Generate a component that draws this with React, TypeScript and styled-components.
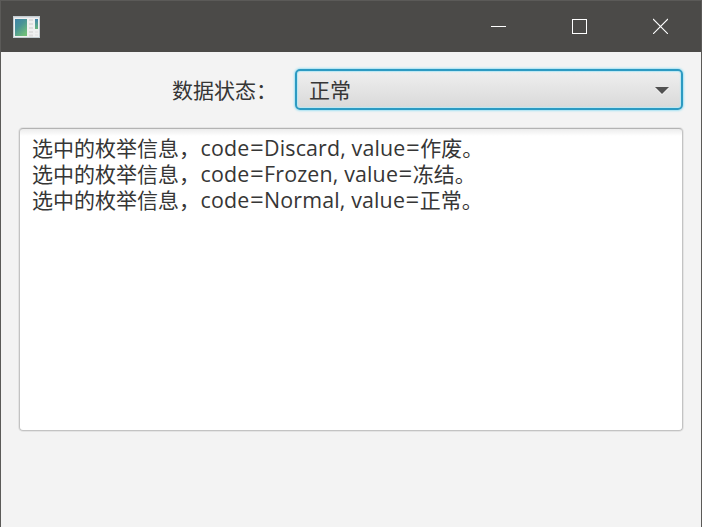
import React from "react";
import styled, { createGlobalStyle } from "styled-components";

const GlobalStyle = createGlobalStyle`
  * { box-sizing: border-box; }
  body { margin: 0; background: #f3f3f3; }
`;

const Window = styled.div`
  display: flex;
  flex-direction: column;
  width: 702px;
  height: 527px;
  overflow: hidden;
  border: 1px solid #5b5a58;
  border-bottom: 0;
  background: #f3f3f3;
  color: #363636;
  font-family: "Noto Sans CJK SC", sans-serif;
  font-size: 21px;
  line-height: 26.4px;
`;

const TitleBar = styled.header`
  display: flex;
  flex: none;
  align-items: center;
  justify-content: space-between;
  height: 51px;
  padding-left: 12px;
  background: #4b4a48;
`;

const Controls = styled.div`
  display: flex;
  height: 100%;
`;

const ControlButton = styled.button`
  display: flex;
  align-items: center;
  justify-content: center;
  width: 81px;
  height: 50px;
  padding: 0;
  border: 0;
  background: transparent;
`;

const Body = styled.main`
  display: flex;
  flex-direction: column;
  padding: 17px 18px 0;
`;

const FormRow = styled.div`
  display: flex;
  align-items: center;
  height: 41px;
`;

const Label = styled.label`
  flex: none;
  width: 276px;
  padding: 0 0 1px 153px;
  white-space: nowrap;
`;

const ComboBox = styled.button`
  display: flex;
  flex: none;
  align-items: center;
  justify-content: space-between;
  width: 388px;
  height: 41px;
  padding: 0 12px 0 12px;
  border: 2px solid #2c9ac2;
  border-radius: 5px;
  background: linear-gradient(#efefef, #d9d9d9);
  box-shadow: 0 0 2px 1px #a5e2f3, inset 0 0 1px 1px #b9e7f3;
  color: inherit;
  font: inherit;
`;

const Selected = styled.span`
  padding-bottom: 1px;
`;

const Arrow = styled.svg`
  display: block;
  margin-top: 2px;
`;

const TextArea = styled.section`
  width: 664px;
  height: 303px;
  margin-top: 18px;
  padding: 5px 12px;
  border: 1px solid #c3c3c3;
  border-top-color: #b3b3b3;
  border-radius: 4px;
  background: linear-gradient(#ececec, #fff 7px);
  box-shadow: 0 0 0 1px #e4e4e4;
`;

const Line = styled.div`
  display: flex;
  align-items: baseline;
  height: 26px;
  line-height: 26px;
  white-space: pre;
`;

const Prefix = styled.span`
  width: 168.6px;
`;

const Latin = styled.span`
  font-family: "Open Sans", sans-serif;
  font-size: 21.4px;
  letter-spacing: 0.15px;
`;

const Equals = styled.span`
  width: 14.7px;
  font-family: "Open Sans", sans-serif;
  font-size: 24px;
  text-align: center;
`;

const entries = [
  { code: "Discard", value: "作废" },
  { code: "Frozen", value: "冻结" },
  { code: "Normal", value: "正常" },
];

const AppIcon = () => (
  <svg width="28" height="24" viewBox="0 0 28 24">
    <defs>
      <linearGradient id="pane" x1="0" y1="0" x2="0.7" y2="1">
        <stop offset="0" stopColor="#3f83a8" />
        <stop offset="0.45" stopColor="#489297" />
        <stop offset="1" stopColor="#70be79" />
      </linearGradient>
      <linearGradient id="bar" x1="0" y1="0" x2="0" y2="1">
        <stop offset="0" stopColor="#4285ad" />
        <stop offset="1" stopColor="#68b67b" />
      </linearGradient>
    </defs>
    <rect x="0.5" y="1.5" width="26" height="21" fill="#f0f1f1" stroke="#c3cdd1" />
    <path d="M1 2.5h25" stroke="#dcdde2" />
    <rect x="2" y="4" width="12" height="17" fill="url(#pane)" />
    <path d="M16 5h4M16 9h4M16 13h4M16 17h4M16 20.5h4" stroke="#dedede" strokeWidth="2" />
    <rect x="22" y="4" width="3" height="10" fill="url(#bar)" />
    <path d="M22 17h3M22 20h3" stroke="#e0e0e0" />
  </svg>
);

export default function App() {
  return (
    <>
      <GlobalStyle />
      <Window>
        <TitleBar>
          <AppIcon />
          <Controls>
            <ControlButton aria-label="Minimize">
              <svg width="15" height="16" viewBox="0 0 15 16" stroke="#fff">
                <path d="M0 8.5h15" />
              </svg>
            </ControlButton>
            <ControlButton aria-label="Maximize">
              <svg width="15" height="16" viewBox="0 0 15 16" stroke="#fff" fill="none">
                <rect x="0.5" y="1.5" width="14" height="14" />
              </svg>
            </ControlButton>
            <ControlButton aria-label="Close">
              <svg width="15" height="16" viewBox="0 0 15 16" stroke="#fff" strokeWidth="1.1">
                <path d="M0 1l15 15M15 1L0 16" />
              </svg>
            </ControlButton>
          </Controls>
        </TitleBar>
        <Body>
          <FormRow>
            <Label>数据状态：</Label>
            <ComboBox>
              <Selected>正常</Selected>
              <Arrow width="14" height="8" viewBox="0 0 14 8">
                <path d="M0 1h14L7 8z" fill="#f5f5f5" />
                <path d="M0 0h14L7 7z" fill="#515151" />
              </Arrow>
            </ComboBox>
          </FormRow>
          <TextArea>
            {entries.map((e) => (
              <Line key={e.code}>
                <Prefix>选中的枚举信息，</Prefix>
                <Latin>code</Latin>
                <Equals>=</Equals>
                <Latin>{`${e.code}, value`}</Latin>
                <Equals>=</Equals>
                <span>{e.value}。</span>
              </Line>
            ))}
          </TextArea>
        </Body>
      </Window>
    </>
  );
}
